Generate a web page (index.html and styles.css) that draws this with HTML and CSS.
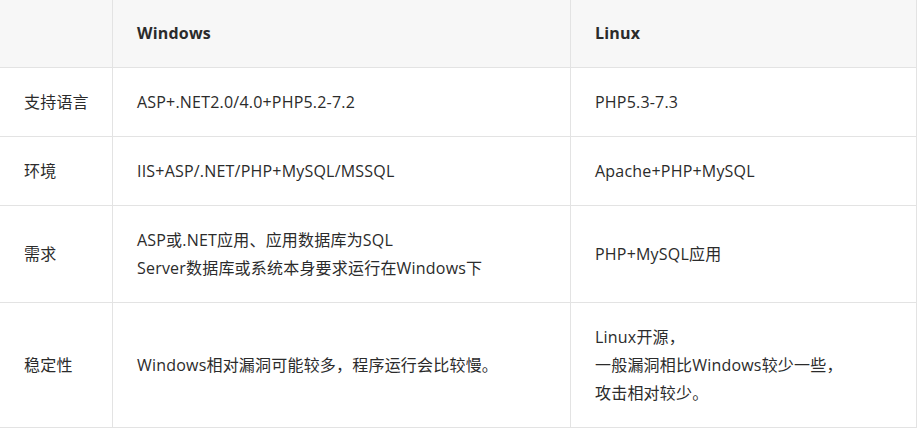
FILE: index.html
```html
<!DOCTYPE html>
<html lang="zh-CN">
<head>
<meta charset="utf-8">
<title>Windows vs Linux</title>
<link rel="stylesheet" href="styles.css">
</head>
<body>
<table class="cmp">
  <colgroup>
    <col class="c1"><col class="c2"><col class="c3">
  </colgroup>
  <thead>
    <tr><th class="label"></th><th>Windows</th><th>Linux</th></tr>
  </thead>
  <tbody>
    <tr><td class="label">支持语言</td><td>ASP+.NET2.0/4.0+PHP5.2-7.2</td><td>PHP5.3-7.3</td></tr>
    <tr><td class="label">环境</td><td>IIS+ASP/.NET/PHP+MySQL/MSSQL</td><td>Apache+PHP+MySQL</td></tr>
    <tr><td class="label">需求</td><td>ASP或.NET应用、应用数据库为SQL<br>Server数据库或系统本身要求运行在Windows下</td><td>PHP+MySQL应用</td></tr>
    <tr><td class="label">稳定性</td><td>Windows相对漏洞可能较多，程序运行会比较慢。</td><td>Linux开源，<br>一般漏洞相比Windows较少一些，<br>攻击相对较少。</td></tr>
  </tbody>
</table>
</body>
</html>
```
FILE: styles.css
```css
html, body {
  margin: 0;
  padding: 0;
  background: #fff;
}
.cmp {
  border-collapse: separate;
  border-spacing: 0;
  table-layout: fixed;
  width: 917px;
  font-family: "Open Sans", "Noto Sans CJK SC", sans-serif;
  font-size: 16px;
  line-height: 28px;
  letter-spacing: 0.2px;
  color: #2b2b2b;
}
.c1 { width: 113px; }
.c2 { width: 458px; }
.c3 { width: 346px; }
.cmp th, .cmp td {
  box-sizing: border-box;
  text-align: left;
  vertical-align: middle;
  padding: 20px 24px;
  border-right: 1px solid #e3e3e3;
  border-bottom: 1px solid #e3e3e3;
  font-weight: normal;
}
.cmp .label {
  white-space: nowrap;
  padding-right: 8px;
}
.cmp thead th {
  background: #f7f7f7;
  font-weight: bold;
  padding-top: 19px;
}
```
